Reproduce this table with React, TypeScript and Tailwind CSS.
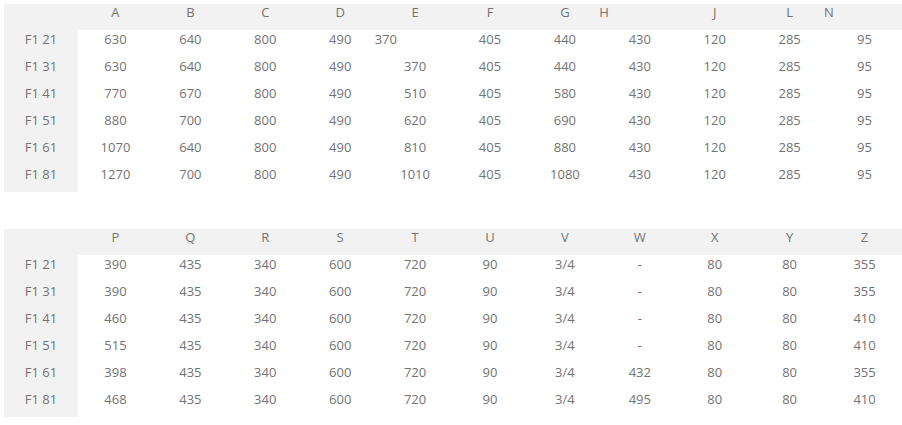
import React from "react";

type Cell = string | { v: string; left?: boolean };

type Props = {
  head: Cell[];
  rows: { label: string; values: Cell[] }[];
};

const models = ["F1 21", "F1 31", "F1 41", "F1 51", "F1 61", "F1 81"];

const top: Props = {
  head: ["A", "B", "C", "D", "E", "F", "G", { v: "H", left: true }, "J", "L", { v: "N", left: true }],
  rows: [
    ["630", "640", "800", "490", { v: "370", left: true }, "405", "440", "430", "120", "285", "95"],
    ["630", "640", "800", "490", "370", "405", "440", "430", "120", "285", "95"],
    ["770", "670", "800", "490", "510", "405", "580", "430", "120", "285", "95"],
    ["880", "700", "800", "490", "620", "405", "690", "430", "120", "285", "95"],
    ["1070", "640", "800", "490", "810", "405", "880", "430", "120", "285", "95"],
    ["1270", "700", "800", "490", "1010", "405", "1080", "430", "120", "285", "95"],
  ].map((values, i) => ({ label: models[i], values })),
};

const bottom: Props = {
  head: ["P", "Q", "R", "S", "T", "U", "V", "W", "X", "Y", "Z"],
  rows: [
    ["390", "435", "340", "600", "720", "90", "3/4", "-", "80", "80", "355"],
    ["390", "435", "340", "600", "720", "90", "3/4", "-", "80", "80", "355"],
    ["460", "435", "340", "600", "720", "90", "3/4", "-", "80", "80", "410"],
    ["515", "435", "340", "600", "720", "90", "3/4", "-", "80", "80", "410"],
    ["398", "435", "340", "600", "720", "90", "3/4", "432", "80", "80", "355"],
    ["468", "435", "340", "600", "720", "90", "3/4", "495", "80", "80", "410"],
  ].map((values, i) => ({ label: models[i], values })),
};

const CellText = ({ cell }: { cell: Cell }) => {
  if (typeof cell === "string") return <span>{cell}</span>;
  return <span className="block text-left -ml-[3px]">{cell.v}</span>;
};

const SizeTable = ({ head, rows }: Props) => {
  return (
    <div className="grid w-[898px] grid-cols-[74px_repeat(11,minmax(0,1fr))] text-center">
      <div className="h-[26px] bg-[#f2f2f2]" />
      {head.map((h, i) => (
        <div key={i} className="h-[26px] bg-[#f2f2f2] leading-[16px]">
          <CellText cell={h} />
        </div>
      ))}
      {rows.map((r) => (
        <React.Fragment key={r.label}>
          <div className="h-[27px] bg-[#f2f2f2] leading-[18px]">{r.label}</div>
          {r.values.map((v, i) => (
            <div key={i} className="h-[27px] leading-[18px]">
              <CellText cell={v} />
            </div>
          ))}
        </React.Fragment>
      ))}
    </div>
  );
};

export default function App() {
  return (
    <div className="min-h-[425px] w-[902px] bg-white pl-[4px] pt-[4px] font-['Open_Sans',sans-serif] text-[13px] text-[#737373]">
      <div className="flex flex-col gap-[37px]">
        <SizeTable {...top} />
        <SizeTable {...bottom} />
      </div>
    </div>
  );
}
